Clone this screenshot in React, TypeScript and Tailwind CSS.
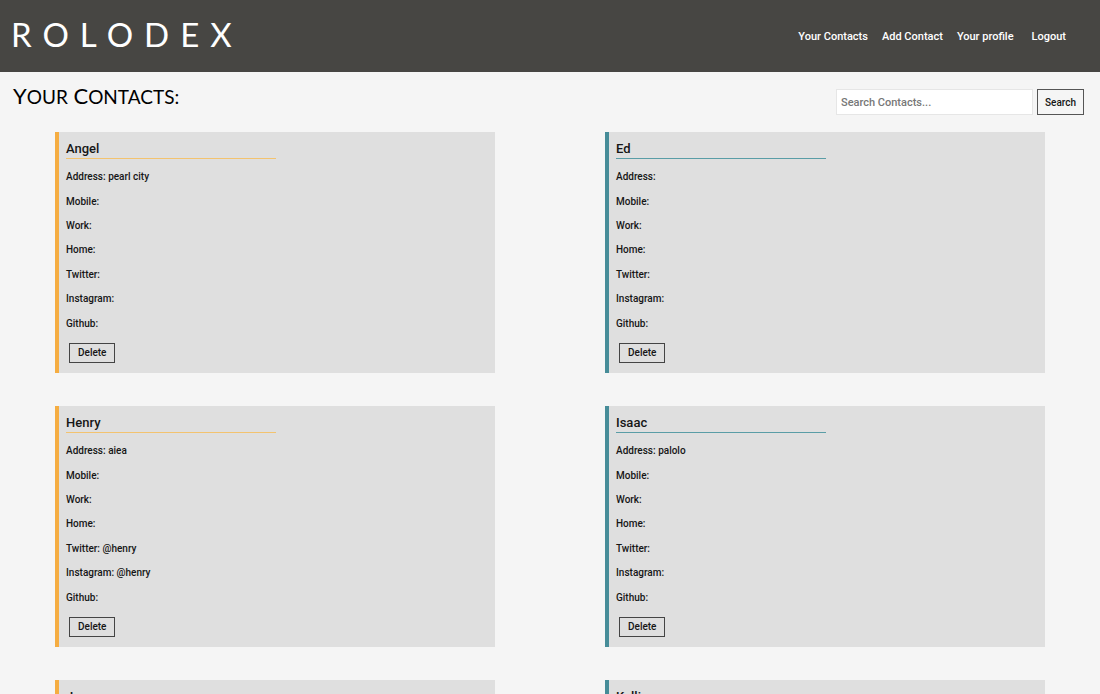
import React from "react";

type Contact = {
  name: string;
  address?: string;
  twitter?: string;
  instagram?: string;
};

const contacts: Contact[] = [
  { name: "Angel", address: "pearl city" },
  { name: "Ed" },
  { name: "Henry", address: "aiea", twitter: "@henry", instagram: "@henry" },
  { name: "Isaac", address: "palolo" },
  { name: "Jason" },
  { name: "Kelli" },
];

function ContactCard({ contact, index }: { contact: Contact; index: number }) {
  const warm = index % 2 === 0;
  const rows: [string, string | undefined][] = [
    ["Address", contact.address],
    ["Mobile", undefined],
    ["Work", undefined],
    ["Home", undefined],
    ["Twitter", contact.twitter],
    ["Instagram", contact.instagram],
    ["Github", undefined],
  ];
  return (
    <li className="px-[10%]">
      <article
        className={`border-l-4 bg-[#dfdfdf] pt-[9px] pb-2.5 pl-[7px] ${warm ? "border-[#f5ad42]" : "border-[#468c98]"}`}
      >
        <h2
          className={`w-[49%] border-b pb-px text-[13px] leading-4 font-medium ${warm ? "border-b-[#f3c36f]" : "border-b-[#5a9da6]"}`}
        >
          {contact.name}
        </h2>
        <ul className="mt-1.5 mb-[7px] grid h-[171px] grid-rows-7 items-center text-[10px] leading-4">
          {rows.map(([label, value]) => (
            <li key={label}>
              {label}: {value}
            </li>
          ))}
        </ul>
        <button
          type="button"
          className="ml-[3px] block h-5 border border-[#444] px-2 text-[10px] leading-4"
        >
          Delete
        </button>
      </article>
    </li>
  );
}

export default function App() {
  return (
    <div className="min-h-screen bg-[#f5f5f5] font-['Roboto',sans-serif] font-medium text-[#161616]">
      <header className="flex h-[72px] items-center justify-between bg-[#474643] pr-[34px] pl-[11px] text-white">
        <a href="#home" className="pb-1 font-['Lato',sans-serif] text-[33px] leading-10 font-normal tracking-[11px]">
          ROLODEX
        </a>
        <nav className="flex gap-3.5 pt-0.5 text-[11px]">
          <a href="#contacts">Your Contacts</a>
          <a href="#add">Add Contact</a>
          <a href="#profile">Your profile</a>
          <a href="#logout" className="ml-1">Logout</a>
        </nav>
      </header>
      <main>
        <div className="flex h-[60px] items-start justify-between pr-4 pl-[13px]">
          <h1 className="pt-2.5 font-['Lato',sans-serif] text-[22px] leading-7 font-normal text-black">
            Y<span className="text-[19px]">OUR</span> C<span className="text-[19px]">ONTACTS:</span>
          </h1>
          <form className="flex gap-1 pt-[17px]" onSubmit={(e) => e.preventDefault()}>
            <input
              type="search"
              aria-label="Search contacts"
              placeholder="Search Contacts..."
              className="h-[26px] w-[197px] border border-[#e6e6e6] bg-white px-1 text-[11px] placeholder:text-[#777]"
            />
            <button type="submit" className="h-[26px] border border-[#555] px-[7px] text-[10px]">
              Search
            </button>
          </form>
        </div>
        <ul className="grid grid-cols-2 gap-y-[33px] pb-8">
          {contacts.map((contact, index) => (
            <ContactCard key={contact.name} contact={contact} index={index} />
          ))}
        </ul>
      </main>
    </div>
  );
}
